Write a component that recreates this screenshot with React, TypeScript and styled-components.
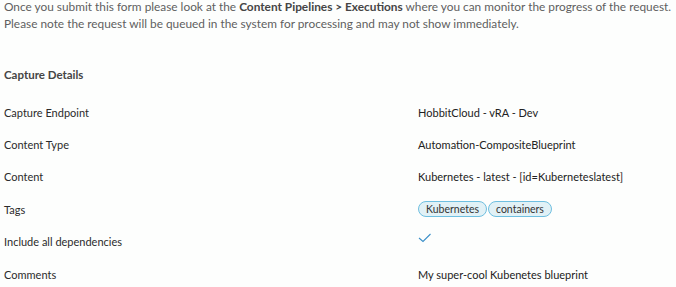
import React from 'react';
import styled, { createGlobalStyle } from 'styled-components';

const GlobalStyle = createGlobalStyle`
  body {
    margin: 0;
    background: #fdfefd;
    font-family: Lato, "Open Sans", sans-serif;
  }
`;

const Page = styled.div`
  padding: 0 4px;
  width: 676px;
  box-sizing: border-box;
`;

const Intro = styled.p`
  margin: -2px 0 0;
  font-size: 11.85px;
  line-height: 17px;
  color: #5f5f5f;
  white-space: nowrap;

  strong {
    font-weight: 700;
    color: #454545;
  }
`;

const SectionTitle = styled.h3`
  margin: 35px 0 13px;
  font-size: 11.5px;
  line-height: 16px;
  font-weight: 700;
  color: #454545;
`;

const DetailsGrid = styled.div`
  display: grid;
  grid-template-columns: 414px 1fr;
  grid-auto-rows: 32.4px;
  align-items: center;
`;

const Label = styled.div`
  font-size: 11px;
  color: #2b2b2b;
`;

const Value = styled.div`
  font-size: 11px;
  color: #222;
  display: flex;
  align-items: center;
  gap: 1px;
`;

const Tag = styled.span`
  display: inline-block;
  height: 16px;
  line-height: 14px;
  padding: 0 7px;
  box-sizing: border-box;
  border: 1px solid #6fbfe0;
  border-radius: 8px;
  background: #e1f1f6;
  color: #333;
  font-size: 10.5px;
`;

const CheckIcon = () => (
  <svg width="14" height="10" viewBox="0 0 14 10" style={{ marginBottom: 8 }}>
    <path d="M1 5 L5 8.5 L12.5 1" fill="none" stroke="#3a8fc8" strokeWidth="1.1" />
  </svg>
);

const rows: { label: string; value: React.ReactNode }[] = [
  { label: 'Capture Endpoint', value: 'HobbitCloud - vRA - Dev' },
  { label: 'Content Type', value: 'Automation-CompositeBlueprint' },
  { label: 'Content', value: 'Kubernetes - latest - [id=Kuberneteslatest]' },
  {
    label: 'Tags',
    value: (
      <>
        <Tag>Kubernetes</Tag>
        <Tag>containers</Tag>
      </>
    ),
  },
  { label: 'Include all dependencies', value: <CheckIcon /> },
  { label: 'Comments', value: 'My super-cool Kubenetes blueprint' },
];

function App() {
  return (
    <Page>
      <GlobalStyle />
      <Intro>
        Once you submit this form please look at the <strong>Content Pipelines &gt; Executions</strong> where you can
        monitor the progress of the request.
        <br />
        Please note the request will be queued in the system for processing and may not show immediately.
      </Intro>
      <SectionTitle>Capture Details</SectionTitle>
      <DetailsGrid>
        {rows.map((row) => (
          <React.Fragment key={row.label}>
            <Label>{row.label}</Label>
            <Value>{row.value}</Value>
          </React.Fragment>
        ))}
      </DetailsGrid>
    </Page>
  );
}

export default App;
